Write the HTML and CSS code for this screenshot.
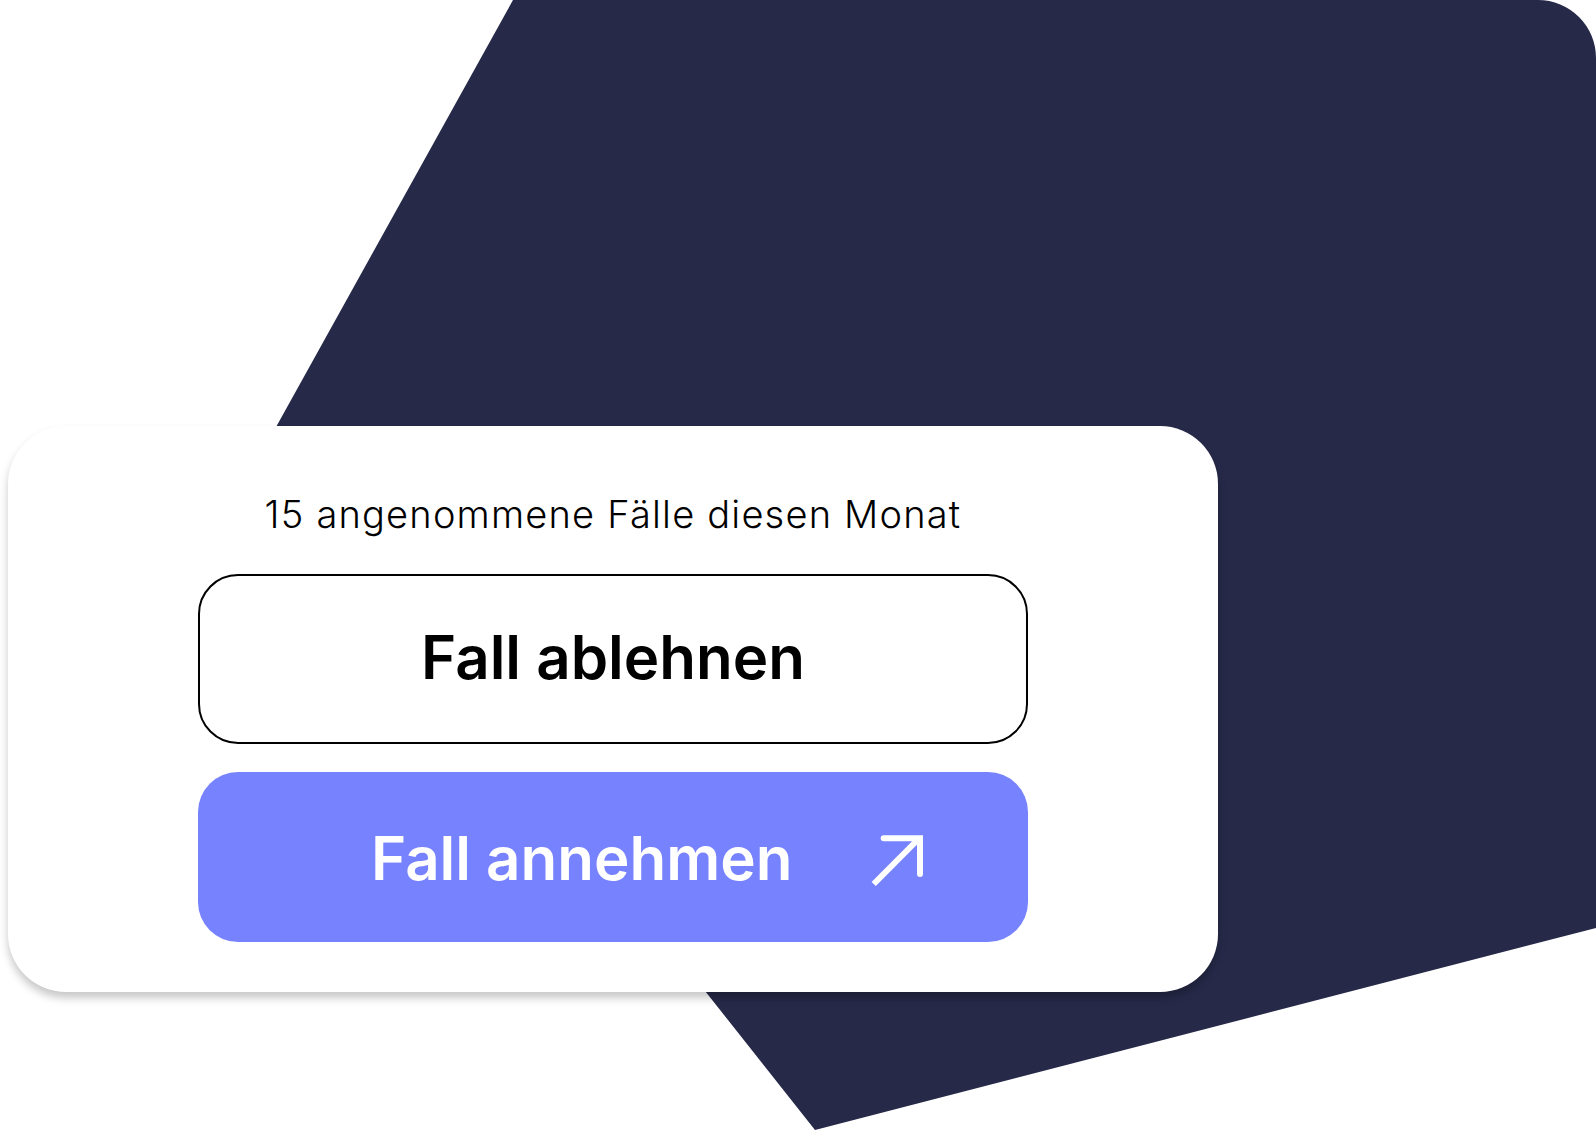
FILE: index.html
```
<!DOCTYPE html>
<html lang="de">
<head>
  <meta charset="UTF-8"/>
  <meta name="viewport" content="width=device-width,initial-scale=1.0"/>
  <title>Fälle</title>
  <link rel="stylesheet" href="styles.css">
</head>
<body>
<!-- dark backdrop shape behind the card -->
<svg class="backdrop" width="1596" height="1130" viewBox="0 0 1596 1130" aria-hidden="true">
  <path d="M513 0 H1538 A58 58 0 0 1 1596 58 V928 L815 1130 L554 800 L230 510 Z" fill="#262948"/>
</svg>
<div class="stage">
  <div class="case-card">
    <p class="stat">15 angenommene Fälle diesen Monat</p>
    <div class="actions">
      <button type="button" class="btn btn-outline">Fall ablehnen</button>
      <button type="button" class="btn btn-primary">
        <span>Fall annehmen</span>
        <svg class="arrow" width="54" height="56" viewBox="0 0 54 56" aria-hidden="true">
          <path d="M2.7 51 L46 7.5" stroke="#fff" stroke-width="6" fill="none"/>
          <path d="M12.7 5.3 H49 V41" stroke="#fff" stroke-width="6" fill="none" stroke-linecap="round" stroke-linejoin="miter"/>
        </svg>
      </button>
    </div>
  </div>
</div>
</body>
</html>
```

FILE: styles.css
```
html, body { margin:0; padding:0; }
body { background:#fff; font-family: Inter, "Noto Sans", sans-serif; width:1596px; height:1130px; overflow:hidden; position:relative; }
.backdrop { position:absolute; left:0; top:0; }
.stage { position:relative; padding:426px 0 0 8px; }
.case-card { width:1210px; height:566px; box-sizing:border-box; background:#fff; border-radius:58px; box-shadow:0 6px 8px rgba(0,0,0,0.22); padding:65px 0 0 0; display:flex; flex-direction:column; align-items:center; }
.stat { margin:0; font-size:38px; line-height:46px; font-weight:350; letter-spacing:1.2px; color:#000; padding-left:0; }
.actions { margin-top:37px; width:830px; display:flex; flex-direction:column; gap:28px; }
.btn { height:170px; flex:none; box-sizing:border-box; border-radius:40px; font-family:inherit; font-size:60px; font-weight:600; display:flex; align-items:center; padding-bottom:6px; cursor:pointer; }
.btn-outline { background:#fff; color:#000; border:2px solid #000; justify-content:center; }
.btn-primary { background:#7782ff; color:#fff; border:none; justify-content:space-between; padding-left:173px; padding-right:103px; padding-top:2px; padding-bottom:0; }
.arrow { display:block; margin-top:5px; }
```
